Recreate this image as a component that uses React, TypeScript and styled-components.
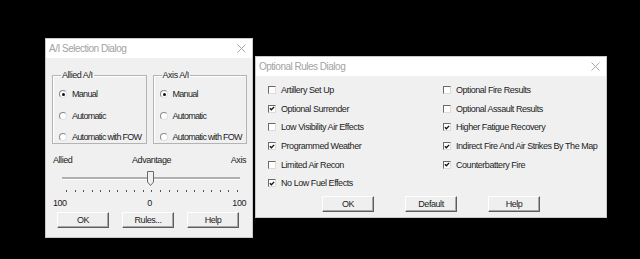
import * as React from "react";
import styled, { createGlobalStyle } from "styled-components";

const GlobalStyle = createGlobalStyle`
  html, body {
    margin: 0;
    padding: 0;
    background: #000;
    width: 640px;
    height: 259px;
    overflow: hidden;
    font-family: "Liberation Sans", Arial, sans-serif;
  }
`;

const Desktop = styled.div`
  display: flex;
  align-items: flex-start;
  gap: 2px;
  padding: 38px 0 0 45px;
`;

const Window = styled.div<{ $w: number; $h: number; $top?: number }>`
  width: ${(p) => p.$w}px;
  height: ${(p) => p.$h}px;
  margin-top: ${(p) => p.$top || 0}px;
  box-sizing: border-box;
  background: #f0f0f0;
  border: 1px solid #c9c9c9;
  display: flex;
  flex-direction: column;
  color: #1c1c1c;
  font-size: 9px;
  letter-spacing: -0.45px;
  white-space: nowrap;
`;

const TitleBar = styled.div`
  height: 19px;
  flex: none;
  background: #fff;
  display: flex;
  align-items: center;
  justify-content: space-between;
  padding: 0 6px 0 3px;
  color: #a2a2a2;
  font-size: 10px;
  letter-spacing: -0.5px;
`;

const Close = styled.svg`
  width: 9px;
  height: 9px;
`;

const SelBody = styled.div`
  display: flex;
  flex-direction: column;
  padding: 12px 5px 0 6px;
`;

const Groups = styled.div`
  display: flex;
  gap: 6px;
`;

const Group = styled.fieldset`
  margin: 0;
  min-width: 0;
  width: 95px;
  height: 74px;
  box-sizing: border-box;
  border: 1px solid #b4b4b4;
  box-shadow: inset 1px 1px 0 #fff;
  padding: 8px 0 0 6px;
  display: flex;
  flex-direction: column;
  gap: 9.5px;
  letter-spacing: -0.7px;
  legend {
    padding: 0 1px;
    margin-left: 2px;
    letter-spacing: -0.45px;
  }
`;

const Option = styled.label`
  display: flex;
  align-items: center;
  gap: 5px;
  height: 12px;
`;

const RadioDot = styled.span<{ $on?: boolean }>`
  width: 8px;
  height: 8px;
  flex: none;
  border-radius: 50%;
  box-sizing: border-box;
  background: #fff;
  border: 1px solid #8a8a8a;
  border-right-color: #e0e0e0;
  border-bottom-color: #e0e0e0;
  position: relative;
  &::after {
    content: "";
    display: ${(p) => (p.$on ? "block" : "none")};
    position: absolute;
    left: 2px;
    top: 2px;
    width: 3px;
    height: 3px;
    border-radius: 50%;
    background: #111;
  }
`;

const Scale = styled.div<{ $top: number }>`
  display: flex;
  justify-content: space-between;
  margin-top: ${(p) => p.$top}px;
  padding: 0 1px;
  height: 11px;
  line-height: 11px;
`;

const SliderWrap = styled.div`
  position: relative;
  margin: 5px 7px 0 10px;
  height: 14px;
`;

const Track = styled.div`
  position: absolute;
  left: 0;
  right: 0;
  top: 6px;
  height: 2px;
  background: #b0b0b0;
  border-bottom: 1px solid #fff;
`;

const Thumb = styled.svg`
  position: absolute;
  top: 0;
  width: 7px;
  height: 15px;
`;

const Ticks = styled.div`
  display: flex;
  justify-content: space-between;
  margin: 5px 9px 0 14px;
  height: 2px;
  span {
    width: 1px;
    height: 2px;
    background: #555;
  }
`;

const ButtonRow = styled.div<{ $pad: string; $gap?: number; $top: number }>`
  display: flex;
  justify-content: ${(p) => (p.$gap ? "center" : "space-between")};
  gap: ${(p) => p.$gap || 0}px;
  padding: ${(p) => p.$pad};
  margin-top: ${(p) => p.$top}px;
`;

const Button = styled.button`
  width: 52px;
  height: 16px;
  padding: 0;
  font: inherit;
  letter-spacing: inherit;
  color: #1c1c1c;
  background: #efefef;
  border: 1px solid;
  border-color: #fff #5e5e5e #5e5e5e #fff;
  box-shadow: inset -1px -1px 0 #a8a8a8;
`;

const RulesGrid = styled.div`
  display: grid;
  grid-template-columns: 175px 1fr;
  grid-auto-rows: 18.6px;
  padding: 5px 0 0 12px;
`;

const Check = styled.span`
  width: 8px;
  height: 8px;
  flex: none;
  box-sizing: border-box;
  background: #fff;
  border: 1px solid #6a6a6a;
  border-right-color: #dcdcdc;
  border-bottom-color: #dcdcdc;
  display: flex;
  align-items: center;
  justify-content: center;
  svg {
    width: 7px;
    height: 7px;
  }
`;

const RuleItem = styled(Option)`
  height: auto;
  gap: 5px;
`;

const CloseIcon = () => (
  <Close viewBox="0 0 9 9">
    <path d="M0.5 0.5 L8.5 8.5 M8.5 0.5 L0.5 8.5" stroke="#a8a8a8" strokeWidth="1" />
  </Close>
);

const Radio = ({ label, on }: { label: string; on?: boolean }) => (
  <Option>
    <RadioDot $on={on} />
    {label}
  </Option>
);

const Rule = ({ label, on }: { label: string; on?: boolean }) => (
  <RuleItem>
    <Check>
      {on && (
        <svg viewBox="0 0 7 7">
          <path d="M1 3.2 L2.8 5 L6 1.6" fill="none" stroke="#111" strokeWidth="1.5" />
        </svg>
      )}
    </Check>
    {label}
  </RuleItem>
);

const rules: [string, boolean][] = [
  ["Artillery Set Up", false],
  ["Optional Fire Results", false],
  ["Optional Surrender", true],
  ["Optional Assault Results", false],
  ["Low Visibility Air Effects", false],
  ["Higher Fatigue Recovery", true],
  ["Programmed Weather", true],
  ["Indirect Fire And Air Strikes By The Map", true],
  ["Limited Air Recon", false],
  ["Counterbattery Fire", true],
  ["No Low Fuel Effects", true],
];

export default function App() {
  return (
    <>
      <GlobalStyle />
      <Desktop>
        <Window $w={208} $h={200}>
          <TitleBar>
            <span>A/I Selection Dialog</span>
            <CloseIcon />
          </TitleBar>
          <SelBody>
            <Groups>
              <Group>
                <legend>Allied A/I</legend>
                <Radio label="Manual" on />
                <Radio label="Automatic" />
                <Radio label="Automatic with FOW" />
              </Group>
              <Group>
                <legend>Axis A/I</legend>
                <Radio label="Manual" on />
                <Radio label="Automatic" />
                <Radio label="Automatic with FOW" />
              </Group>
            </Groups>
            <Scale $top={11}>
              <span>Allied</span>
              <span>Advantage</span>
              <span>Axis</span>
            </Scale>
            <SliderWrap>
              <Track />
              <Thumb viewBox="0 0 7 15" style={{ left: "calc(50% - 4px)" }}>
                <path d="M0.5 0.5 H6.5 V11 L3.5 14.5 L0.5 11 Z" fill="#f0f0f0" stroke="#6a6a6a" />
              </Thumb>
            </SliderWrap>
            <Ticks>
              {Array.from({ length: 21 }).map((_, i) => (
                <span key={i} />
              ))}
            </Ticks>
            <Scale $top={6}>
              <span>100</span>
              <span>0</span>
              <span>100</span>
            </Scale>
            <ButtonRow $pad="0 8px 0 5px" $top={3}>
              <Button>OK</Button>
              <Button>Rules...</Button>
              <Button>Help</Button>
            </ButtonRow>
          </SelBody>
        </Window>
        <Window $w={352} $h={162} $top={18}>
          <TitleBar>
            <span>Optional Rules Dialog</span>
            <CloseIcon />
          </TitleBar>
          <RulesGrid>
            {rules.map(([label, on]) => (
              <Rule key={label} label={label} on={on} />
            ))}
          </RulesGrid>
          <ButtonRow $pad="0" $gap={31} $top={3}>
            <Button>OK</Button>
            <Button>Default</Button>
            <Button>Help</Button>
          </ButtonRow>
        </Window>
      </Desktop>
    </>
  );
}
